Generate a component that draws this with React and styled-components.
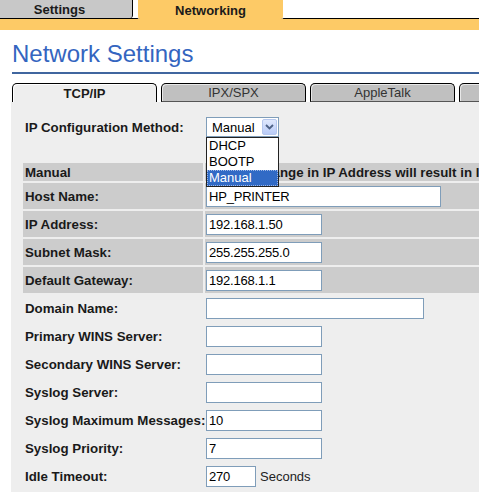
import styled, { createGlobalStyle } from "styled-components"

const GlobalStyle = createGlobalStyle`
  html, body {
    margin: 0;
    padding: 0;
    background: #fff;
    overflow: hidden;
  }
  body {
    font-family: "Liberation Sans", Arial, sans-serif;
    font-size: 13px;
    color: #1a1a1a;
  }
`

const Page = styled.div`
  width: 479px;
  height: 492px;
  overflow: hidden;
`

const TopBar = styled.div`
  display: flex;
  gap: 4px;
  height: 18px;
  margin-left: -14px;
  border-bottom: 1px solid #000;
`

const TopTab = styled.div`
  flex-shrink: 0;
  width: 147px;
  height: ${p => (p.$active ? "19px" : "18px")};
  box-sizing: border-box;
  display: flex;
  align-items: center;
  justify-content: center;
  padding-top: 1px;
  font-weight: bold;
  font-size: 13px;
  color: #1a1a1a;
  background: ${p => (p.$active ? "#fdca66" : "#c8c8c8")};
  border-left: 1px solid ${p => (p.$active ? "#fff" : "#000")};
  border-right: 1px solid ${p => (p.$active ? "#fff" : "#000")};
  border-radius: 0 0 3px 3px;
`

const OrangeStrip = styled.div`
  height: 11px;
  background: #fdca66;
`

const Title = styled.h1`
  margin: 10px 0 0 12px;
  padding-bottom: 4px;
  font-family: "Liberation Sans", Arial, sans-serif;
  font-weight: normal;
  font-size: 24px;
  line-height: 28px;
  color: #3465c0;
  border-bottom: 2px solid #40669f;
`

const SubTabs = styled.div`
  display: flex;
  gap: 4px;
  margin: 9px 0 0 12px;
  height: 19px;
`

const SubTab = styled.div`
  flex-shrink: 0;
  width: 145px;
  box-sizing: border-box;
  display: flex;
  align-items: center;
  justify-content: center;
  font-size: 13px;
  font-weight: ${p => (p.$active ? "bold" : "normal")};
  color: ${p => (p.$active ? "#1a1a1a" : "#333")};
  background: ${p => (p.$active ? "#eeeeee" : "#c0c0c0")};
  border: 1px solid #000;
  border-bottom: ${p => (p.$active ? "none" : "1px solid #555")};
  border-radius: 5px 5px 0 0;
  box-shadow: ${p => (p.$active ? "inset 1px 1px 0 #fff" : "inset 1px 1px 0 #e8e8e8")};
`

const Panel = styled.div`
  margin-left: 11px;
  height: 390px;
  padding: 12px 0 0 12px;
  box-sizing: border-box;
  background: #eeeeee;
`

const Rows = styled.div`
  display: flex;
  flex-direction: column;
  gap: 2px;
  margin-top: ${p => p.$gap || 0}px;
`

const Row = styled.div`
  display: grid;
  grid-template-columns: 180px 1fr;
  column-gap: 2px;
  height: ${p => p.$h || 26}px;
`

const Label = styled.div`
  display: flex;
  align-items: center;
  padding-left: 2px;
  font-weight: bold;
  font-size: 13.3px;
  white-space: nowrap;
  background: ${p => (p.$shade ? "#cccccc" : "transparent")};
`

const Value = styled.div`
  position: relative;
  display: flex;
  align-items: center;
  gap: 4px;
  padding-left: ${p => (p.$text ? 2 : 1)}px;
  white-space: nowrap;
  overflow: ${p => (p.$open ? "visible" : "hidden")};
  font-weight: ${p => (p.$text ? "bold" : "normal")};
  font-size: ${p => (p.$text ? "13.3px" : "13px")};
  background: ${p => (p.$shade ? "#cccccc" : "transparent")};
`

const TextInput = styled.input`
  width: ${p => p.$w}px;
  height: 21px;
  box-sizing: border-box;
  margin: 0;
  padding: 0 2px;
  border: 1px solid #7f9db9;
  background: #fff;
  font-family: "Liberation Sans", Arial, sans-serif;
  font-size: 13px;
  letter-spacing: -0.2px;
  color: #000;
  outline: none;
`

const Unit = styled.span`
  font-size: 13px;
  color: #222;
`

const Select = styled.div`
  position: relative;
  width: 73px;
  height: 20px;
  box-sizing: border-box;
  display: flex;
  align-items: center;
  padding: 0 1px 0 5px;
  border: 1px solid #7f9db9;
  background: #fff;
  font-size: 13px;
  color: #000;
`

const Arrow = styled.span`
  margin-left: auto;
  width: 15px;
  height: 16px;
  box-sizing: border-box;
  display: flex;
  align-items: center;
  justify-content: center;
  border: 1px solid #b5c7ee;
  border-radius: 2px;
  background: linear-gradient(#dfe8fd, #b9cbf7);
`

const List = styled.div`
  position: absolute;
  z-index: 5;
  left: -1px;
  top: calc(100% + 1px);
  width: 73px;
  box-sizing: border-box;
  border: 1px solid #222;
  background: #fff;
`

const Option = styled.div`
  height: 16px;
  line-height: 16px;
  padding-left: 2px;
  box-sizing: border-box;
  font-size: 13px;
  color: ${p => (p.$selected ? "#fff" : "#000")};
  background: ${p => (p.$selected ? "#316ac5" : "#fff")};
  outline: ${p => (p.$selected ? "1px dotted #9fb9e8" : "none")};
  outline-offset: -1px;
`

const fields = [
  { label: "Host Name:", value: "HP_PRINTER", w: 235, shade: true },
  { label: "IP Address:", value: "192.168.1.50", w: 116, shade: true },
  { label: "Subnet Mask:", value: "255.255.255.0", w: 116, shade: true },
  { label: "Default Gateway:", value: "192.168.1.1", w: 116, shade: true },
  { label: "Domain Name:", value: "", w: 218 },
  { label: "Primary WINS Server:", value: "", w: 116 },
  { label: "Secondary WINS Server:", value: "", w: 116 },
  { label: "Syslog Server:", value: "", w: 116 },
  { label: "Syslog Maximum Messages:", value: "10", w: 116 },
  { label: "Syslog Priority:", value: "7", w: 116 },
  { label: "Idle Timeout:", value: "270", w: 50, unit: "Seconds" },
]

const methods = ["DHCP", "BOOTP", "Manual"]

const App = () => {
  return (
    <Page>
      <GlobalStyle />
      <TopBar>
        <TopTab>Settings</TopTab>
        <TopTab $active>Networking</TopTab>
      </TopBar>
      <OrangeStrip />
      <Title>Network Settings</Title>
      <SubTabs>
        <SubTab $active>TCP/IP</SubTab>
        <SubTab>IPX/SPX</SubTab>
        <SubTab>AppleTalk</SubTab>
        <SubTab>&nbsp;</SubTab>
      </SubTabs>
      <Panel>
        <Rows>
          <Row>
            <Label>IP Configuration Method:</Label>
            <Value $open>
              <Select>
                Manual
                <Arrow>
                  <svg width="9" height="6" viewBox="0 0 9 6">
                    <path d="M1 1 L4.5 4.5 L8 1" fill="none" stroke="#4d6185" strokeWidth="1.8" />
                  </svg>
                </Arrow>
                <List>
                  {methods.map(m => (
                    <Option key={m} $selected={m === "Manual"}>{m}</Option>
                  ))}
                </List>
              </Select>
            </Value>
          </Row>
        </Rows>
        <Rows $gap={23}>
          <Row $h={18}>
            <Label $shade>Manual</Label>
            <Value $shade $text>Note: A change in IP Address will result in loss of connection.</Value>
          </Row>
          {fields.map(f => (
            <Row key={f.label}>
              <Label $shade={f.shade}>{f.label}</Label>
              <Value $shade={f.shade}>
                <TextInput $w={f.w} defaultValue={f.value} />
                {f.unit && <Unit>{f.unit}</Unit>}
              </Value>
            </Row>
          ))}
        </Rows>
      </Panel>
    </Page>
  )
}

export default App
